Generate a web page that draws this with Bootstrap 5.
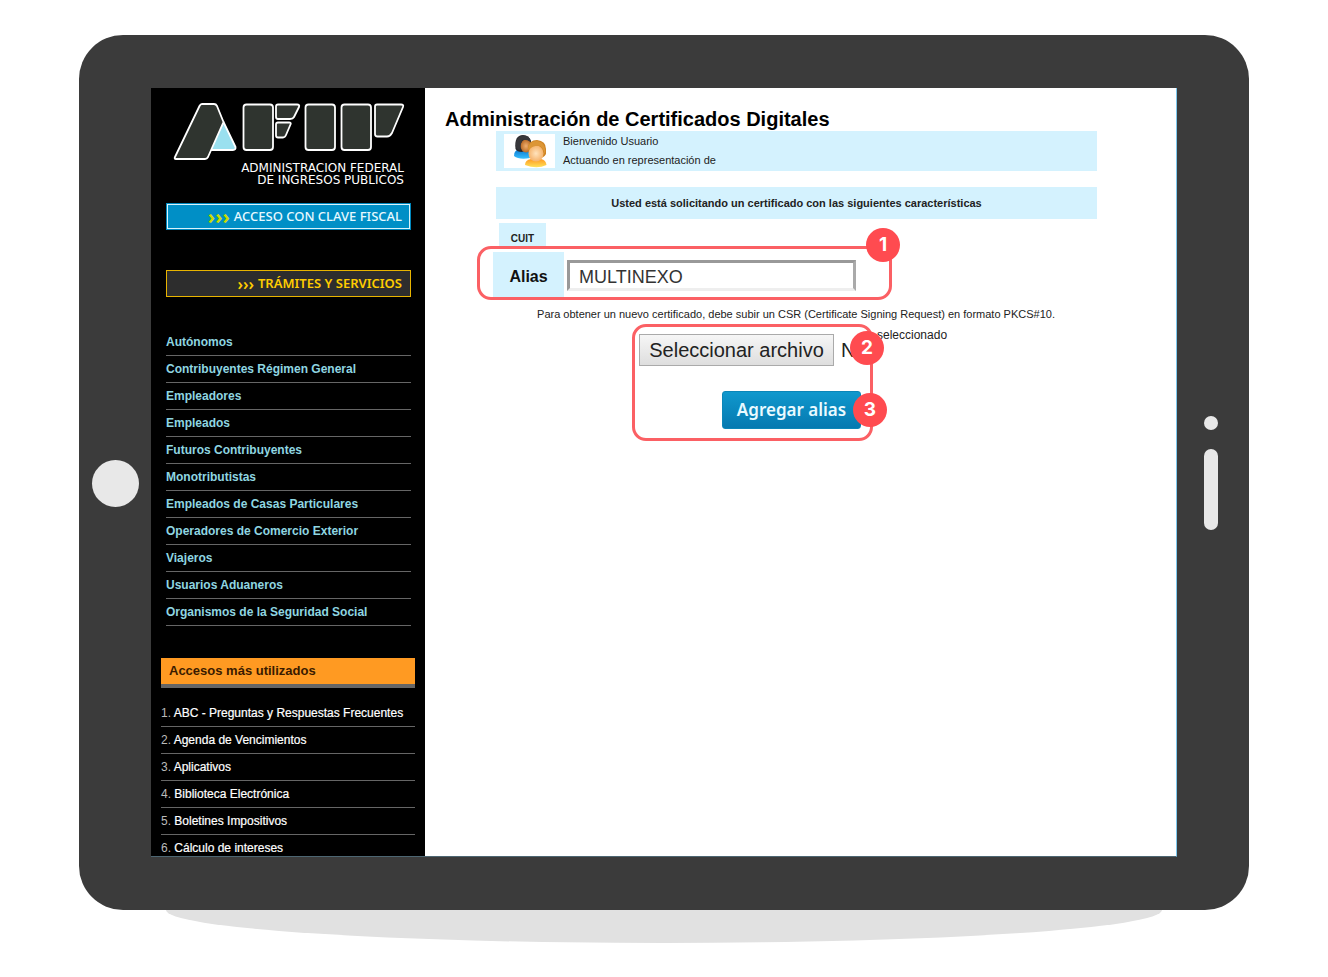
<!DOCTYPE html>
<html lang="es">
<head>
<meta charset="utf-8">
<meta name="viewport" content="width=device-width, initial-scale=1">
<title>Administración de Certificados Digitales</title>
<link href="https://cdn.jsdelivr.net/npm/bootstrap@5.3.0/dist/css/bootstrap.min.css" rel="stylesheet">
<style>
body { font-family: "Liberation Sans", Arial, sans-serif; font-size: 12px; background: #fff; color: #222; }
.stage { padding: 35px 79px; }
.tablet { background: #3b3b3b; border-radius: 44px; padding: 53px 0; }
.bezel { flex: 0 0 72px; }
.home-key { width: 47px; height: 47px; background: #e8e8e8; margin-top: 22px; }
.led { width: 14px; height: 14px; background: #e8e8e8; }
.speaker { width: 14px; height: 81px; background: #e8e8e8; margin-top: 19px; }
.floor-shadow { height: 33px; margin: 0 87px; background: #e1e1e1; border-radius: 0 0 50% 50% / 0 0 100% 100%; }
.screen { background: #fff; border-right: 1px solid #7cc8ee; border-bottom: 1px solid #4d6672; }
.side { flex: 0 0 274px; background: #000; padding: 14px 10px 0; }
.brand-text { font: 12px/12px "DejaVu Sans", sans-serif; color: #fff; padding-right: 11px; }
.top-links { padding: 0 4px 0 5px; }
.side-btn { display: block; width: 100%; height: 27px; padding: 0 8px; text-align: right; border-radius: 0; font: 600 13px/25px "Noto Sans", sans-serif; white-space: nowrap; }
.btn-fiscal { background: #008fc6; border: 1px solid #0087bd; box-shadow: inset 0 0 0 1px #d8f3fb; color: #e6f9ff; margin-top: 17px; font-weight: 500; }
.btn-fiscal span { color: #c8dc00; font-size: 20px; line-height: 20px; font-weight: 700; }
.btn-tramites { background: #2d2d2d; border: 1px solid #e8b400; color: #fc0; margin-top: 40px; }
.btn-tramites span { font-size: 16px; line-height: 20px; }
.side-list { list-style: none; padding: 0; margin: 0; }
.side-list li { border-bottom: 1px solid #666; line-height: 26px; white-space: nowrap; }
.side-list a { text-decoration: none; }
.topics { margin-top: 32px; }
.topics a { color: #8fd6e1; font-weight: bold; }
.used-title { background: #ff9a22; border-bottom: 4px solid #666; color: #3a1a00; font-size: 13px; font-weight: bold; line-height: 26px; padding-left: 8px; margin: 32px 0 12px; }
.used { color: #bbb; }
.used a { color: #fff; -webkit-text-stroke: .2px #fff; }
.used li:last-child { border: 0; line-height: 26px; height: 21px; }
.work { padding: 19px 79px 0 20px; min-width: 0; }
.work h1 { font-size: 20px; line-height: 24px; font-weight: bold; color: #000; margin: 0; }
.panel { background: #d4f2fe; margin-left: 51px; }
.welcome { height: 40px; font-size: 11px; line-height: 19px; padding-top: 1px; }
.avatar { width: 51px; height: 34px; background: #fff; margin: 2px 8px 0; }
.notice { font-size: 11px; font-weight: bold; line-height: 32px; }
.cuit { width: 47px; height: 23px; padding-top: 8px; margin: 4px 0 0 54px; font-size: 10px; font-weight: bold; line-height: 16px; }
.callout-box { position: relative; border: 3px solid #fb6064; border-radius: 14px; }
.box-alias { max-width: 415px; height: 54px; margin-left: 32px; padding: 3px 0 0 13px; }
.alias-label { width: 71px; height: 45px; background: #d4f2fe; color: #111; font-size: 16px; font-weight: bold; line-height: 50px; }
.alias-field { width: 289px; height: 31px; margin: 8px 0 0 3px; padding: 3px 9px 0; border: 3px solid; border-color: #999 #aaa #eee #999; border-radius: 0; font-size: 18px; color: #333; }
.hint { font-size: 11px; line-height: 14px; margin: 7px 0 3px 50px; white-space: nowrap; }
.upload { margin-left: 187px; }
.box-upload { width: 241px; padding: 7px 0 9px 4px; }
.file-btn { height: 32px; width: 195px; border: 1px solid #aaa; background: linear-gradient(#f6f6f6, #dedede); color: #222; font-size: 20px; line-height: 30px; }
.file-name { font-size: 20px; line-height: 32px; margin-left: 7px; }
.add-btn { width: 139px; height: 38px; margin: 25px 0 0 83px; padding: 0; border: 1px solid #0b86b8; border-radius: 3px; background: linear-gradient(#1098cd, #0579b0); color: #e9faff; font: 600 17px/34px "Noto Sans", sans-serif; }
.file-rest { font-size: 12px; line-height: 16px; margin: 3px 0 0 4px; }
.step { position: absolute; width: 34px; height: 34px; background: #ff4b50; color: #fff; font: 700 19px/34px Inter, sans-serif; text-align: center; z-index: 1; }
.step-1 { right: -11px; top: -21px; }
.step-2 { right: -14px; top: 4px; }
.step-3 { right: -17px; top: 66px; }
</style>
</head>
<body>
<div class="stage">
  <div class="tablet d-flex">
    <div class="bezel d-flex align-items-center justify-content-center"><div class="home-key rounded-circle"></div></div>
    <div class="screen d-flex flex-grow-1">
      <nav class="side" aria-label="Servicios">
        <svg class="d-block" width="254" height="60" viewBox="161 102 254 60" role="img" aria-label="AFIP">
          <g fill="#2f342f" stroke="#fff" stroke-width="1.8" stroke-linejoin="round">
            <path fill="#9ae0ef" d="M223.500 122L235.500 147Q236 150 233 150H209Z"/>
            <path d="M202 104H214Q216 104 217 106L223.500 122L208 157Q207 159 205 159H176Q174 159 175 157L199.500 106Q200.500 104 202 104Z"/>
            <rect x="243.500" y="104.500" width="29.500" height="45.500" rx="3"/>
            <path d="M278 104.500H297Q300 104.500 299 107L294 117Q293 119 290 119H278Q276 119 276 117V106.500Q276 104.500 278 104.500Z"/>
            <path d="M278 122.500H289Q291.500 122.500 290.500 124.500L286 135Q285 137.500 283 137.500H278Q276 137.500 276 135.500V124.500Q276 122.500 278 122.500Z"/>
            <rect x="305.500" y="104.500" width="29.500" height="45.500" rx="3"/>
            <rect x="341.500" y="104.500" width="29.500" height="45.500" rx="3"/>
            <path d="M377 104.500H401Q404 104.500 403 107L392 133Q390 136.500 387 136.500H377.500Q375 136.500 375 134V106.500Q375 104.500 377 104.500Z"/>
          </g>
        </svg>
        <div class="brand-text text-end">ADMINISTRACION FEDERAL<br>DE INGRESOS PUBLICOS</div>
        <div class="top-links">
          <button type="button" class="side-btn btn-fiscal d-flex align-items-center justify-content-end gap-1"><span>›››</span>ACCESO CON CLAVE FISCAL</button>
          <button type="button" class="side-btn btn-tramites d-flex align-items-center justify-content-end gap-1"><span>›››</span>TRÁMITES Y SERVICIOS</button>
          <ul class="side-list topics">
            <li><a href="#">Autónomos</a></li>
            <li><a href="#">Contribuyentes Régimen General</a></li>
            <li><a href="#">Empleadores</a></li>
            <li><a href="#">Empleados</a></li>
            <li><a href="#">Futuros Contribuyentes</a></li>
            <li><a href="#">Monotributistas</a></li>
            <li><a href="#">Empleados de Casas Particulares</a></li>
            <li><a href="#">Operadores de Comercio Exterior</a></li>
            <li><a href="#">Viajeros</a></li>
            <li><a href="#">Usuarios Aduaneros</a></li>
            <li><a href="#">Organismos de la Seguridad Social</a></li>
          </ul>
        </div>
        <h2 class="used-title">Accesos más utilizados</h2>
        <ol class="side-list used">
          <li>1. <a href="#">ABC - Preguntas y Respuestas Frecuentes</a></li>
          <li>2. <a href="#">Agenda de Vencimientos</a></li>
          <li>3. <a href="#">Aplicativos</a></li>
          <li>4. <a href="#">Biblioteca Electrónica</a></li>
          <li>5. <a href="#">Boletines Impositivos</a></li>
          <li>6. <a href="#">Cálculo de intereses</a></li>
        </ol>
      </nav>
      <main class="work flex-grow-1">
        <h1>Administración de Certificados Digitales</h1>
        <div class="panel welcome d-flex">
          <div class="avatar">
            <svg class="d-block" width="51" height="34" viewBox="0 0 51 34" aria-hidden="true">
              <defs>
                <linearGradient id="blue" x2="0" y2="1"><stop stop-color="#0a78d0"/><stop offset="1" stop-color="#39c0ff"/></linearGradient>
                <linearGradient id="gold" x2="0" y2="1"><stop stop-color="#ff9a20"/><stop offset="1" stop-color="#ffe25a"/></linearGradient>
                <radialGradient id="tan"><stop stop-color="#f0b070"/><stop offset="1" stop-color="#b96a26"/></radialGradient>
                <radialGradient id="skin"><stop stop-color="#ffe3bd"/><stop offset="1" stop-color="#f5b36c"/></radialGradient>
              </defs>
              <path fill="url(#blue)" d="M10 22Q10 16 15 15.500H23Q26 17 26 24Q15 26 10 22Z"/>
              <path fill="#2c2c30" d="M11.500 15Q10 1 19 1Q25 1 27 7L26 14L18 18Q13 18 11.500 15Z"/>
              <ellipse cx="22" cy="12" rx="5.500" ry="6.500" fill="url(#tan)"/>
              <path fill="#37373b" d="M12 8Q15 1 20 1.500Q26 2 27 8Q22 5 18 6Q16 12 16 16Q11 16 12 8Z"/>
              <path fill="url(#gold)" d="M21 31Q21 26 27 25H37Q42 26 42.500 31Q33 35.500 21 31Z"/>
              <path fill="#cf8424" d="M24 14Q25 6 33 6Q42 7 42 15V20Q40 24 35 24L25 20Z"/>
              <ellipse cx="32" cy="19.500" rx="7.500" ry="8" fill="url(#skin)"/>
              <path fill="#dc9636" d="M24 16Q24 7 33 7Q42 8 41 20Q39 14 36 12Q30 11 24 16Z"/>
            </svg>
          </div>
          <div>Bienvenido Usuario<br>Actuando en representación de</div>
        </div>
        <div class="panel notice text-center mt-3">Usted está solicitando un certificado con las siguientes características</div>
        <div class="panel cuit text-center">CUIT</div>
        <form>
          <div class="callout-box box-alias d-flex">
            <label class="alias-label text-center" for="alias">Alias</label>
            <input class="alias-field" id="alias" type="text" value="MULTINEXO">
            <span class="step step-1 rounded-circle">1</span>
          </div>
          <p class="hint text-center">Para obtener un nuevo certificado, debe subir un CSR (Certificate Signing Request) en formato PKCS#10.</p>
          <div class="upload d-flex">
            <div class="callout-box box-upload">
              <div class="d-flex">
                <label class="file-btn text-center" for="csr">Seleccionar archivo</label>
                <input class="visually-hidden" id="csr" type="file">
                <span class="file-name">N</span>
              </div>
              <button type="button" class="add-btn">Agregar alias</button>
              <span class="step step-2 rounded-circle">2</span>
              <span class="step step-3 rounded-circle">3</span>
            </div>
            <span class="file-rest">seleccionado</span>
          </div>
        </form>
      </main>
    </div>
    <div class="bezel d-flex flex-column align-items-center justify-content-center pe-1">
      <div class="led rounded-circle"></div>
      <div class="speaker rounded-pill"></div>
    </div>
  </div>
  <div class="floor-shadow"></div>
</div>
<script src="https://cdn.jsdelivr.net/npm/bootstrap@5.3.0/dist/js/bootstrap.bundle.min.js"></script>
</body>
</html>
